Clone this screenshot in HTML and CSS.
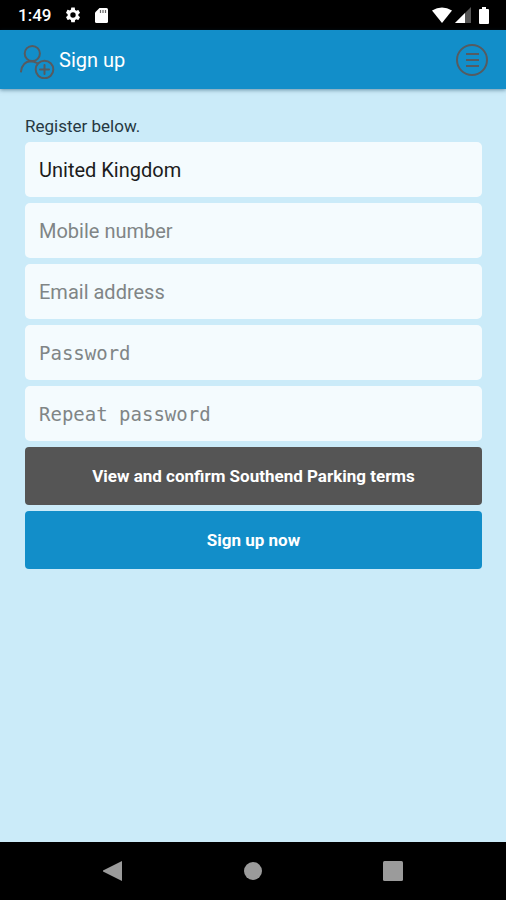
FILE: index.html
```html
<!DOCTYPE html>
<html lang="en">
<head>
<meta charset="utf-8">
<meta name="viewport" content="width=device-width, initial-scale=1">
<title>Sign up</title>
<link rel="stylesheet" href="styles.css">
</head>
<body>
<div class="status-bar">
  <div class="status-group">
    <span class="clock">1:49</span>
    <svg width="18" height="18" viewBox="0 0 24 24" aria-hidden="true"><path fill="#fff" d="M19.14 12.94c.04-.3.06-.61.06-.94s-.02-.64-.07-.94l2.03-1.58a.49.49 0 0 0 .12-.61l-1.92-3.32a.49.49 0 0 0-.59-.22l-2.39.96a7 7 0 0 0-1.62-.94l-.36-2.54A.48.48 0 0 0 13.92 2h-3.84a.48.48 0 0 0-.48.41l-.36 2.54c-.59.24-1.13.57-1.62.94l-2.39-.96a.48.48 0 0 0-.59.22L2.74 8.87a.47.47 0 0 0 .12.61l2.03 1.58a6 6 0 0 0 0 1.88l-2.03 1.58a.49.49 0 0 0-.12.61l1.92 3.32c.12.22.37.29.59.22l2.39-.96c.5.38 1.03.7 1.62.94l.36 2.54c.05.24.24.41.48.41h3.84c.24 0 .44-.17.47-.41l.36-2.54a7 7 0 0 0 1.62-.94l2.39.96c.22.08.47 0 .59-.22l1.92-3.32a.47.47 0 0 0-.12-.61zM12 15.6a3.6 3.6 0 1 1 0-7.2 3.6 3.6 0 0 1 0 7.2z"/></svg>
    <svg width="13" height="15" viewBox="0 0 13 15" aria-hidden="true"><path fill="#fff" d="M4.500 0H11.500A1.500 1.500 0 0 1 13 1.500V13.500A1.500 1.500 0 0 1 11.500 15H1.500A1.500 1.500 0 0 1 0 13.500V4.500Z"/><path stroke="#666" stroke-width="1.200" d="M5.500 2v3M8 2v3M10.500 2v3"/></svg>
  </div>
  <div class="status-group status-right">
    <svg width="20" height="16" viewBox="0 0 20 16" aria-hidden="true"><path fill="#fff" d="M0 3.500Q10-2.500 20 3.500L10 16Z"/></svg>
    <svg width="16" height="16" viewBox="0 0 16 16" aria-hidden="true"><path fill="#555" d="M16 0V16H0Z"/><path fill="#fff" d="M10 6V16H0Z"/></svg>
    <svg class="battery" width="10" height="17" viewBox="0 0 10 17" aria-hidden="true"><path fill="#fff" d="M3 0h4v2h2a1 1 0 0 1 1 1v13a1 1 0 0 1-1 1H1a1 1 0 0 1-1-1V3a1 1 0 0 1 1-1h2z"/></svg>
  </div>
</div>

<header class="app-bar">
  <svg width="35" height="38" viewBox="0 0 35 38" fill="none" stroke="#565b60" stroke-width="2" stroke-linecap="round" aria-hidden="true"><circle cx="12.300" cy="12.500" r="7.600"/><path d="M1 30.500C2 24 5 20.500 10.500 20.300Q14 20.300 17 22"/><circle cx="24.500" cy="28.500" r="8.800"/><path d="M24.500 24v9M20 28.500h9"/></svg>
  <h1 class="title">Sign up</h1>
  <button class="menu" type="button" aria-label="Menu">
    <svg width="32" height="32" viewBox="0 0 32 32" fill="none" stroke="#565b60" stroke-width="2" aria-hidden="true"><circle cx="16" cy="16" r="15"/><path d="M10 10h13M10 16h13M10 22h13"/></svg>
  </button>
</header>

<main class="content">
  <p class="intro">Register below.</p>
  <form class="form">
    <select class="field" aria-label="Country"><option>United Kingdom</option></select>
    <input class="field" type="tel" placeholder="Mobile number" aria-label="Mobile number">
    <input class="field" type="email" placeholder="Email address" aria-label="Email address">
    <input class="field secret" type="password" placeholder="Password" aria-label="Password">
    <input class="field secret" type="password" placeholder="Repeat password" aria-label="Repeat password">
    <button class="action terms" type="button">View and confirm Southend Parking terms</button>
    <button class="action" type="button">Sign up now</button>
  </form>
</main>

<nav class="nav-bar" aria-label="System">
  <button type="button" aria-label="Back"><svg width="20" height="20" viewBox="0 0 20 20" aria-hidden="true"><path fill="#9b9b9b" d="M19 0V20L0 10.500V9.500Z"/></svg></button>
  <button type="button" aria-label="Home"><svg width="20" height="20" viewBox="0 0 20 20" aria-hidden="true"><circle fill="#9b9b9b" cx="10" cy="10" r="9"/></svg></button>
  <button type="button" aria-label="Recent apps"><svg width="20" height="20" viewBox="0 0 20 20" aria-hidden="true"><rect fill="#9b9b9b" width="20" height="20" rx="1.500"/></svg></button>
</nav>
</body>
</html>
```
FILE: styles.css
```css
* {
  box-sizing: border-box;
}

body {
  margin: 0;
  min-height: 100vh;
  display: flex;
  flex-direction: column;
  background: #cbebf9;
  font-family: Roboto, "Noto Sans", sans-serif;
}

svg {
  display: block;
}

button {
  padding: 0;
  border: 0;
  background: none;
  font: inherit;
  cursor: pointer;
}

.status-bar {
  display: flex;
  justify-content: space-between;
  height: 30px;
  padding: 0 17px 0 18px;
  background: #000;
  color: #fff;
}

.status-group {
  display: flex;
  align-items: center;
  gap: 13px;
}

.status-right {
  gap: 3px;
}

.battery {
  margin-left: 5px;
}

.clock {
  font-size: 17px;
  font-weight: 500;
}

.app-bar {
  display: flex;
  align-items: center;
  gap: 4px;
  height: 59px;
  padding: 0 18px 0 20px;
  background: #128ec9;
  box-shadow: 0 1px 4px rgba(0, 50, 80, 0.5);
}

.title {
  flex: 1;
  margin: 0;
  color: #fff;
  font-size: 20px;
  font-weight: 400;
}

.content {
  flex: 1;
  padding: 26px 24px 24px 25px;
}

.intro {
  margin: 0 0 5px;
  color: #263842;
  font-size: 17px;
  line-height: 22px;
}

.form {
  display: flex;
  flex-direction: column;
  gap: 6px;
}

.field {
  appearance: none;
  width: 100%;
  height: 55px;
  padding: 0 14px;
  border: 0;
  border-radius: 5px;
  background: #f4fbfe;
  color: #1c1c1c;
  font-family: inherit;
  font-size: 20px;
}

.field::placeholder {
  color: #808586;
  opacity: 1;
}

.secret {
  font-family: "DejaVu Sans Mono", monospace;
  font-size: 19px;
}

.action {
  height: 58px;
  border-radius: 4px;
  background: #128ec9;
  color: #fff;
  font-size: 17px;
  font-weight: 700;
}

.terms {
  background: #555;
}

.nav-bar {
  display: flex;
  align-items: center;
  justify-content: center;
  gap: 120px;
  height: 58px;
  background: #000;
}
```
